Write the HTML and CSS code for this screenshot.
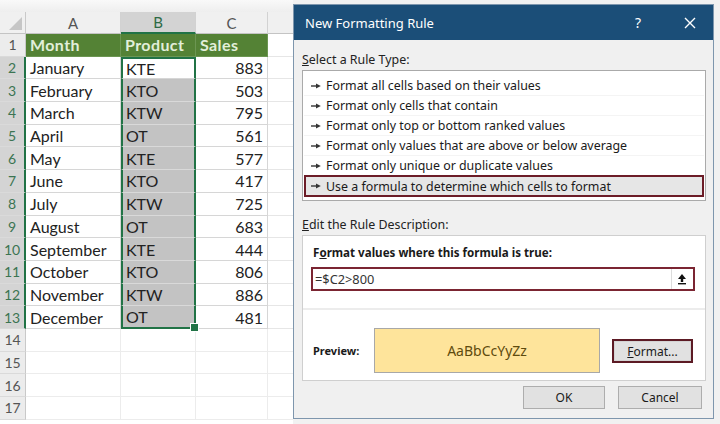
FILE: index.html
```html
<!DOCTYPE html>
<html lang="en">
<head>
    <meta charset="UTF-8">
    <meta name="viewport" content="width=device-width, initial-scale=1.0">
    <title>New Formatting Rule</title>
    <link rel="stylesheet" href="styles.css">
</head>
<body>

    <svg class="defs" width="0" height="0">
        <symbol id="arrow" viewBox="0 0 10 6">
            <path d="M0 3h6" stroke="#333" stroke-width="1.4"/>
            <path d="M5 0.6L9.8 3 5 5.4z" fill="#333"/>
        </symbol>
    </svg>

    <div class="screen">
        <!-- worksheet behind the dialog -->
        <div class="sheet">
            <div class="strip"></div>

            <div class="row colhead">
                <div class="rh corner"></div>
                <div class="ch a">A</div>
                <div class="ch b on">B</div>
                <div class="ch c">C</div>
                <div class="ch d"></div>
            </div>

            <div class="row">
                <div class="rh">1</div>
                <div class="cell a head">Month</div>
                <div class="cell b head">Product</div>
                <div class="cell c head">Sales</div>
                <div class="cell d"></div>
            </div>
            <div class="row">
                <div class="rh sel">2</div>
                <div class="cell a">January</div>
                <div class="cell b pick first">KTE</div>
                <div class="cell c num">883</div>
                <div class="cell d"></div>
            </div>
            <div class="row">
                <div class="rh sel">3</div>
                <div class="cell a">February</div>
                <div class="cell b pick shade">KTO</div>
                <div class="cell c num">503</div>
                <div class="cell d"></div>
            </div>
            <div class="row">
                <div class="rh sel">4</div>
                <div class="cell a">March</div>
                <div class="cell b pick shade">KTW</div>
                <div class="cell c num">795</div>
                <div class="cell d"></div>
            </div>
            <div class="row">
                <div class="rh sel">5</div>
                <div class="cell a">April</div>
                <div class="cell b pick shade">OT</div>
                <div class="cell c num">561</div>
                <div class="cell d"></div>
            </div>
            <div class="row">
                <div class="rh sel">6</div>
                <div class="cell a">May</div>
                <div class="cell b pick shade">KTE</div>
                <div class="cell c num">577</div>
                <div class="cell d"></div>
            </div>
            <div class="row">
                <div class="rh sel">7</div>
                <div class="cell a">June</div>
                <div class="cell b pick shade">KTO</div>
                <div class="cell c num">417</div>
                <div class="cell d"></div>
            </div>
            <div class="row">
                <div class="rh sel">8</div>
                <div class="cell a">July</div>
                <div class="cell b pick shade">KTW</div>
                <div class="cell c num">725</div>
                <div class="cell d"></div>
            </div>
            <div class="row">
                <div class="rh sel">9</div>
                <div class="cell a">August</div>
                <div class="cell b pick shade">OT</div>
                <div class="cell c num">683</div>
                <div class="cell d"></div>
            </div>
            <div class="row">
                <div class="rh sel">10</div>
                <div class="cell a">September</div>
                <div class="cell b pick shade">KTE</div>
                <div class="cell c num">444</div>
                <div class="cell d"></div>
            </div>
            <div class="row">
                <div class="rh sel">11</div>
                <div class="cell a">October</div>
                <div class="cell b pick shade">KTO</div>
                <div class="cell c num">806</div>
                <div class="cell d"></div>
            </div>
            <div class="row">
                <div class="rh sel">12</div>
                <div class="cell a">November</div>
                <div class="cell b pick shade">KTW</div>
                <div class="cell c num">886</div>
                <div class="cell d"></div>
            </div>
            <div class="row">
                <div class="rh sel">13</div>
                <div class="cell a">December</div>
                <div class="cell b pick shade last">OT</div>
                <div class="cell c num">481</div>
                <div class="cell d"></div>
            </div>

            <div class="row empty">
                <div class="rh">14</div>
                <div class="cell a"></div>
                <div class="cell b"></div>
                <div class="cell c"></div>
                <div class="cell d"></div>
            </div>
            <div class="row empty">
                <div class="rh">15</div>
                <div class="cell a"></div>
                <div class="cell b"></div>
                <div class="cell c"></div>
                <div class="cell d"></div>
            </div>
            <div class="row empty">
                <div class="rh">16</div>
                <div class="cell a"></div>
                <div class="cell b"></div>
                <div class="cell c"></div>
                <div class="cell d"></div>
            </div>
            <div class="row empty">
                <div class="rh">17</div>
                <div class="cell a"></div>
                <div class="cell b"></div>
                <div class="cell c"></div>
                <div class="cell d"></div>
            </div>
        </div>

        <!-- the dialog window -->
        <div class="dialog">
            <div class="titlebar">
                <span class="title">New Formatting Rule</span>
                <span class="help">?</span>
                <span class="close">
                    <svg width="12" height="12" viewBox="0 0 12 12">
                        <path d="M1 1L11 11M11 1L1 11" stroke="#fff" stroke-width="1.4"/>
                    </svg>
                </span>
            </div>

            <div class="body">
                <div class="label"><u>S</u>elect a Rule Type:</div>
                <div class="rule-list">
                    <div class="rule"><svg class="arr"><use href="#arrow"/></svg>Format all cells based on their values</div>
                    <div class="rule"><svg class="arr"><use href="#arrow"/></svg>Format only cells that contain</div>
                    <div class="rule"><svg class="arr"><use href="#arrow"/></svg>Format only top or bottom ranked values</div>
                    <div class="rule"><svg class="arr"><use href="#arrow"/></svg>Format only values that are above or below average</div>
                    <div class="rule"><svg class="arr"><use href="#arrow"/></svg>Format only unique or duplicate values</div>
                    <div class="rule chosen"><svg class="arr"><use href="#arrow"/></svg>Use a formula to determine which cells to format</div>
                </div>

                <div class="label gap"><u>E</u>dit the Rule Description:</div>
                <div class="desc">
                    <div class="upper">
                        <div class="bold-label">F<u>o</u>rmat values where this formula is true:</div>
                        <div class="formula">
                            <span class="formula-text">=$C2&gt;800</span>
                            <span class="collapse">
                                <svg width="10" height="12" viewBox="0 0 10 12">
                                    <path d="M5 1L1 6h2.8v3h2.4V6H9z" fill="#111"/>
                                    <rect x="1" y="10" width="8" height="1.4" fill="#111"/>
                                </svg>
                            </span>
                        </div>
                    </div>
                    <div class="lower">
                        <span class="preview-label">Preview:</span>
                        <div class="preview">AaBbCcYyZz</div>
                        <button class="btn format-btn"><u>F</u>ormat...</button>
                    </div>
                </div>

                <div class="actions">
                    <button class="btn ok">OK</button>
                    <button class="btn cancel">Cancel</button>
                </div>
            </div>
        </div>
    </div>

</body>
</html>
```

FILE: styles.css
```css
* {
    box-sizing: border-box;
}

body {
    margin: 0;
    width: 720px;
    height: 424px;
    overflow: hidden;
    background-color: #f1f1f1;
    font-family: "Noto Sans", "Open Sans", sans-serif;
}

.defs {
    position: absolute;
}

.screen {
    display: flex;
    height: 424px;
}

/* worksheet */

.sheet {
    width: 293px;
    flex: none;
    background-color: #fff;
    font-family: Lato, "Liberation Sans", sans-serif;
    font-size: 16px;
    color: #222;
}

.strip {
    height: 12px;
    background: linear-gradient(#f9f9f9, #eeeeee);
}

.row {
    display: flex;
    height: 22.7px;
}

.row.colhead {
    height: 22px;
}

.rh {
    width: 26px;
    flex: none;
    display: flex;
    align-items: center;
    justify-content: center;
    background-color: #ececec;
    border-right: 1px solid #c9c9c9;
    border-bottom: 1px solid #dadada;
    font-size: 14px;
    color: #555;
}

.rh.sel {
    background-color: #d4d4d4;
    color: #3b7452;
    border-right: 2px solid #217346;
}

.rh.corner {
    position: relative;
    background-color: #f0f0f0;
    border-bottom: 1px solid #c4c4c4;
}

.rh.corner::after {
    content: "";
    position: absolute;
    right: 3px;
    bottom: 3px;
    border-left: 13px solid transparent;
    border-bottom: 13px solid #c6c6c6;
}

.a { width: 95px; }
.b { width: 75px; }
.c { width: 72px; }
.d { width: 25px; }

.ch {
    flex: none;
    display: flex;
    align-items: center;
    justify-content: center;
    background-color: #f0f0f0;
    border-right: 1px solid #d2d2d2;
    border-bottom: 1px solid #c4c4c4;
    font-size: 15px;
    color: #555;
}

.ch.on {
    background-color: #d3d3d3;
    color: #2d6a45;
    border-bottom: 2px solid #217346;
}

.ch.d {
    border-right: none;
}

.cell {
    flex: none;
    display: flex;
    align-items: center;
    padding: 0 4px;
    border-right: 1px solid #d6d6d6;
    border-bottom: 1px solid #d6d6d6;
    white-space: nowrap;
}

.cell.d {
    border-right: none;
    border-bottom-color: #e6e6e6;
}

.cell.head {
    background-color: #548235;
    color: #e2efda;
    font-weight: bold;
    letter-spacing: 0.4px;
    border-right-color: #6c9652;
    border-bottom-color: #6c9652;
}

.cell.num {
    justify-content: flex-end;
}

.cell.pick {
    border-left: 2px solid #217346;
    border-right: 2px solid #217346;
    padding-left: 3px;
}

.cell.shade {
    background-color: #c3c3c3;
    border-bottom-color: #d9d9d9;
}

.cell.first {
    border-top: 2px solid #217346;
}

.cell.last {
    position: relative;
    border-bottom: 2px solid #217346;
}

.cell.last::after {
    content: "";
    position: absolute;
    right: -5px;
    bottom: -5px;
    width: 7px;
    height: 7px;
    background-color: #217346;
    border: 1px solid #fff;
}

.row.empty .cell {
    border-right-color: #ececec;
    border-bottom-color: #ececec;
}

/* dialog */

.dialog {
    width: 421px;
    height: 415px;
    margin-top: 4px;
    flex: none;
    display: flex;
    flex-direction: column;
    background-color: #f0f0f0;
    border: 1px solid #7e96ad;
    font-size: 12.4px;
    color: #1a1a1a;
}

.titlebar {
    height: 35px;
    flex: none;
    display: flex;
    align-items: center;
    padding-left: 11px;
    background-color: #1b4e78;
    color: #fff;
}

.title {
    flex: 1;
    font-size: 13px;
}

.help {
    width: 40px;
    margin-right: 9px;
    text-align: center;
    font-size: 14px;
}

.close {
    width: 46px;
    display: flex;
    justify-content: center;
}

.body {
    flex: 1;
    display: flex;
    flex-direction: column;
    padding: 12px 7px 0 8px;
}

.label {
    line-height: 16px;
    margin-bottom: 2px;
    color: #222;
}

.label.gap {
    margin-top: 16px;
}

.rule-list {
    background-color: #fff;
    border: 1px solid #aaaaaa;
    padding: 5px 1px 3px;
}

.rule {
    height: 20px;
    display: flex;
    align-items: center;
    padding-left: 7px;
    border-bottom: 1px solid #f4f4f4;
}

.arr {
    width: 10px;
    height: 6px;
    margin-right: 5px;
}

.rule.chosen {
    height: 22px;
    margin: -1px 0 0;
    padding-left: 5px;
    background-color: #e6e6e6;
    border: 2px solid #6c1c27;
}

.desc {
    height: 146px;
    background-color: #fff;
    border: 1px solid #cfcfcf;
    display: flex;
    flex-direction: column;
}

.upper {
    height: 72px;
    padding: 9px 10px 0 8px;
}

.bold-label {
    font-size: 11.6px;
    font-weight: bold;
    line-height: 16px;
    margin-left: 2px;
}

.formula {
    height: 24px;
    margin-top: 6px;
    display: flex;
    align-items: center;
    border: 2px solid #7b2532;
}

.formula-text {
    flex: 1;
    padding-left: 2px;
    font-size: 12.8px;
    color: #333;
}

.collapse {
    width: 21px;
    height: 20px;
    margin-right: 1px;
    display: flex;
    align-items: center;
    justify-content: center;
    border-left: 1px solid #dcdcdc;
}

.lower {
    flex: 1;
    display: flex;
    align-items: flex-start;
    padding: 18px 0 0 10px;
    border-top: 2px solid #ececec;
}

.preview-label {
    width: 61px;
    line-height: 45px;
    font-size: 11px;
    font-weight: bold;
}

.preview {
    width: 226px;
    height: 45px;
    display: flex;
    align-items: center;
    justify-content: center;
    background-color: #fee49b;
    border: 1px solid #a8a8a8;
    color: #5e4b0e;
    font-size: 14px;
}

.btn {
    height: 23px;
    padding: 0;
    background-color: #e1e1e1;
    border: 1px solid #adadad;
    font-family: inherit;
    font-size: 12px;
    color: #1a1a1a;
}

.format-btn {
    width: 81px;
    height: 24px;
    margin: 11px 0 0 12px;
    border: 2px solid #5c1a24;
    box-shadow: inset 0 0 0 1px #d4d4d4;
}

.actions {
    display: flex;
    justify-content: flex-end;
    gap: 13px;
    margin-top: 5px;
    padding-right: 4px;
}

.ok {
    width: 82px;
}

.cancel {
    width: 84px;
}
```
